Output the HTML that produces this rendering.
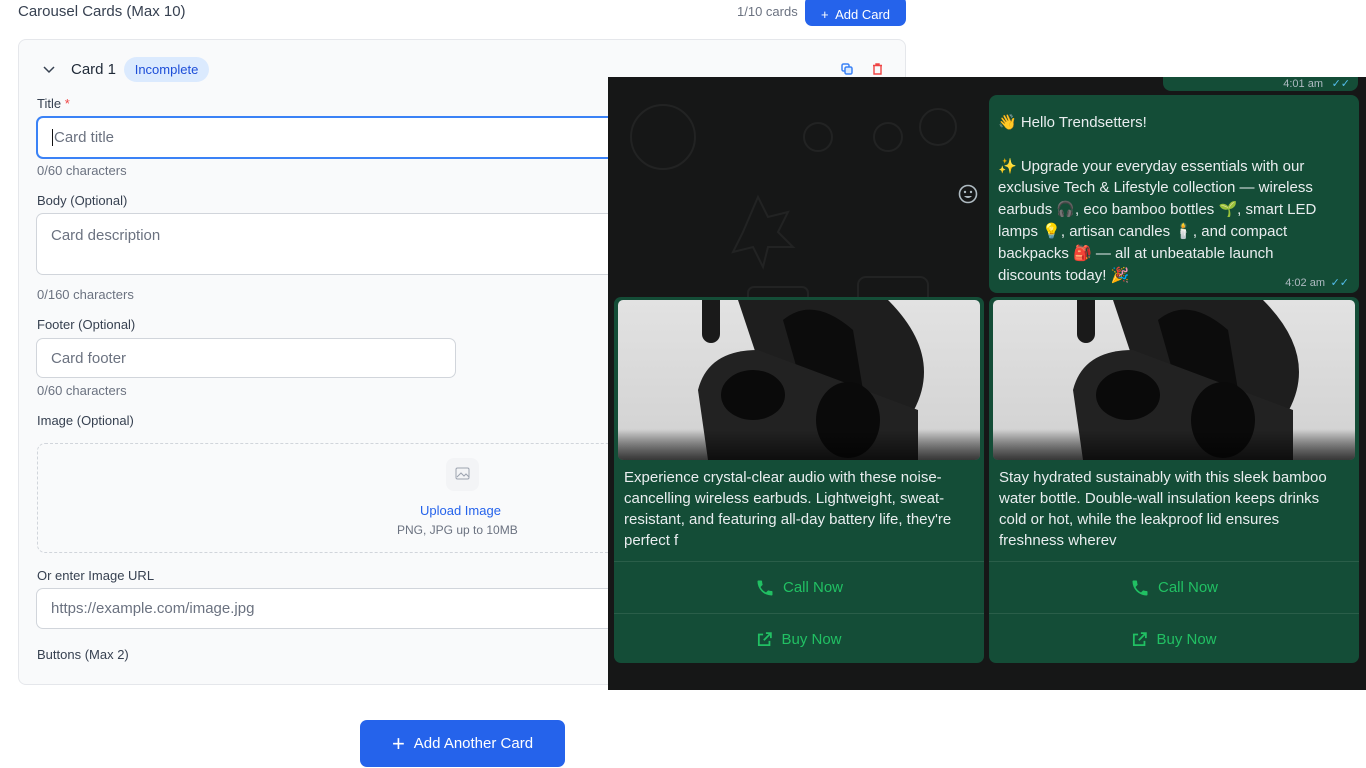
<!DOCTYPE html>
<html><head><meta charset="utf-8"><style>
*{box-sizing:border-box;margin:0;padding:0}
body{width:1366px;height:768px;overflow:hidden;background:#fff;font-family:"Liberation Sans",sans-serif;position:relative;color:#374151}
.abs{position:absolute}
.lbl{position:absolute;left:37px;font-size:13px;color:#374151}
.hint{position:absolute;left:37px;font-size:13px;color:#6b7280}
.inp{position:absolute;left:36px;background:#fff;border:1px solid #d1d5db;border-radius:7px;font-size:15px;color:#6b7280;padding-left:14px;display:flex;align-items:center}
.wa{position:absolute;left:608px;top:77px;width:758px;height:613px;background:#161717;overflow:hidden}
.bub{position:absolute;background:#144d37;border-radius:8px;color:#e9edef;font-size:15px;line-height:21.8px}
.card{position:absolute;top:297px;width:370px;height:366px;background:#144d37;border-radius:7px;overflow:hidden}
.img{position:absolute;left:4px;top:3px;width:362px;height:160px;border-radius:5px;background:linear-gradient(#e2e2e2,#d4d4d4 80%,#8a8a8a);overflow:hidden}
.ctext{position:absolute;left:10px;top:170px;font-size:15px;line-height:21px;color:#e9edef}
.btn{position:absolute;left:0;width:370px;height:52px;border-top:1px solid #2a5e49;color:#21c063;font-size:15px;display:flex;align-items:center;justify-content:center;gap:8px}
</style></head><body>
<div class="abs" style="left:18px;top:3px;font-size:15px;color:#374151">Carousel Cards (Max 10)</div>
<div class="abs" style="left:737px;top:4px;font-size:13px;color:#6b7280">1/10 cards</div>
<div class="abs" style="left:805px;top:-4px;width:101px;height:30px;background:#2563eb;border-radius:7px;color:#fff;font-size:13px;display:flex;align-items:center;justify-content:center;padding-top:6px">+&nbsp; Add Card</div>
<div class="abs" style="left:18px;top:39px;width:888px;height:646px;background:#f9fafb;border:1px solid #e5e7eb;border-radius:8px"></div>
<svg class="abs" style="left:42px;top:64px" width="14" height="12" viewBox="0 0 14 12"><path d="M2 3l5 5 5-5" stroke="#374151" stroke-width="1.5" fill="none"/></svg>
<div class="abs" style="left:71px;top:61px;font-size:15px;color:#1f2937">Card 1</div>
<div class="abs" style="left:124px;top:57px;width:85px;height:25px;background:#dbeafe;border-radius:13px;color:#1d4ed8;font-size:13px;display:flex;align-items:center;justify-content:center">Incomplete</div>
<svg class="abs" style="left:841px;top:63px" width="12" height="12" viewBox="0 0 12 12"><rect x="1" y="1" width="7" height="7" rx="1.5" fill="none" stroke="#3b82f6" stroke-width="1.5"/><rect x="4" y="4" width="7" height="7" rx="1.5" fill="#dbeafe" stroke="#3b82f6" stroke-width="1.5"/></svg>
<svg class="abs" style="left:872px;top:63px" width="11" height="12" viewBox="0 0 11 12"><path d="M1 2.5h9M4 2.5V1h3v1.5M2 3v8h7V3" fill="none" stroke="#ef4444" stroke-width="1.4"/></svg>
<div class="lbl" style="top:96px">Title <span style="color:#ef4444">*</span></div>
<div class="inp" style="top:116px;width:600px;height:43px;border:2px solid #3b82f6;border-right:none;border-radius:7px 0 0 7px"><span style="border-left:1px solid #111;padding-left:1px">Card title</span></div>
<div class="hint" style="top:163px">0/60 characters</div>
<div class="lbl" style="top:193px">Body (Optional)</div>
<div class="inp" style="top:213px;width:600px;height:62px;align-items:flex-start;padding-top:13px;border-right:none">Card description</div>
<div class="hint" style="top:287px">0/160 characters</div>
<div class="lbl" style="top:317px">Footer (Optional)</div>
<div class="inp" style="top:338px;width:420px;height:40px">Card footer</div>
<div class="hint" style="top:383px">0/60 characters</div>
<div class="lbl" style="top:413px">Image (Optional)</div>
<div class="abs" style="left:37px;top:443px;width:600px;height:110px;border:1.5px dashed #d1d5db;border-right:none;border-radius:8px 0 0 8px"></div>
<div class="abs" style="left:446px;top:458px;width:33px;height:33px;background:#f3f4f6;border-radius:8px"></div>
<svg class="abs" style="left:455px;top:467px" width="15" height="14" viewBox="0 0 15 14"><rect x="1" y="1" width="13" height="11" rx="1.5" fill="none" stroke="#9ca3af"/><path d="M2 10l4-4 3 3 2-2 3 3" fill="none" stroke="#9ca3af"/></svg>
<div class="abs" style="left:420px;top:503px;font-size:13px;color:#2563eb">Upload Image</div>
<div class="abs" style="left:397px;top:523px;font-size:12px;color:#6b7280">PNG, JPG up to 10MB</div>
<div class="lbl" style="top:568px">Or enter Image URL</div>
<div class="inp" style="top:588px;width:600px;height:41px;border-right:none">https://example.com/image.jpg</div>
<div class="lbl" style="top:647px">Buttons (Max 2)</div>
<div class="abs" style="left:360px;top:720px;width:205px;height:47px;background:#2563eb;border-radius:7px;color:#fff;font-size:15px;display:flex;align-items:center;justify-content:center">
<span style="font-size:22px;margin-right:9px;font-weight:300">+</span>Add Another Card</div>

<div class="wa">
<svg width="758" height="613" style="position:absolute;left:0;top:0" opacity="0.6">
<g fill="none" stroke="#2a2b2b" stroke-width="2">
<circle cx="55" cy="60" r="32"/><circle cx="210" cy="60" r="14"/><circle cx="280" cy="60" r="14"/><circle cx="330" cy="50" r="18"/>
<path d="M150 120l10 20 20-5-10 20 15 15-25 0-5 20-10-20-20 5 10-20z"/><rect x="140" y="210" width="60" height="50" rx="6"/>
<circle cx="100" cy="300" r="25"/><rect x="60" y="360" width="50" height="40" rx="6"/><circle cx="270" cy="400" r="40"/>
<path d="M20 500l40 20 20 50"/><circle cx="200" cy="520" r="20"/><rect x="250" y="200" width="70" height="40" rx="8"/>
</g></svg>
<div class="bub" style="left:555px;top:-10px;width:195px;height:24px;border-radius:0 0 8px 8px"><span style="position:absolute;left:10px;top:-10px;font-size:15px;color:#e9edef">from group yes</span><span style="position:absolute;right:35px;top:7px;font-size:11px;color:#aebac1">4:01 am</span><span style="position:absolute;right:8px;top:7px;font-size:11px;color:#53bdeb">✓✓</span></div>
<svg class="abs" style="left:350px;top:107px" width="20" height="20" viewBox="0 0 20 20"><circle cx="10" cy="10" r="8.5" fill="none" stroke="#aebac1" stroke-width="1.6"/><circle cx="7" cy="8" r="1.2" fill="#aebac1"/><circle cx="13" cy="8" r="1.2" fill="#aebac1"/><path d="M6 12q4 4 8 0z" fill="#aebac1"/></svg>
</div>
<div class="bub" style="left:989px;top:95px;width:370px;height:198px;padding:17px 9px"><div style="width:335px">👋 Hello Trendsetters!<br><br>✨ Upgrade your everyday essentials with our exclusive Tech &amp; Lifestyle collection — wireless earbuds 🎧, eco bamboo bottles 🌱, smart LED lamps 💡, artisan candles 🕯️, and compact backpacks 🎒 — all at unbeatable launch discounts today! 🎉</div>
<span style="position:absolute;right:34px;bottom:4px;font-size:11px;color:#aebac1;line-height:12px">4:02 am</span><span style="position:absolute;right:10px;bottom:4px;font-size:11px;color:#53bdeb;line-height:12px">✓✓</span></div>

<div class="card" style="left:614px">
<div class="img"><svg width="362" height="160" viewBox="0 0 362 160"><path d="M84 0h18v34a9 9 0 0 1-18 0z" fill="#1a1a1a"/><path d="M120 0h150q60 60 20 120l-40 10-110-70z" fill="#1e1e1e"/><path d="M165 20q30-25 70 10l10 60-60 0z" fill="#0c0c0c"/><path d="M80 90q10-40 60-40l160 60 0 50H90z" fill="#222"/><ellipse cx="135" cy="95" rx="32" ry="25" fill="#0a0a0a"/><ellipse cx="230" cy="120" rx="32" ry="38" fill="#0a0a0a"/><path d="M0 130h362v30H0z" fill="url(#g)" opacity=".6"/><defs><linearGradient id="g" x1="0" y1="0" x2="0" y2="1"><stop offset="0" stop-color="#000" stop-opacity="0"/><stop offset="1" stop-color="#000"/></linearGradient></defs></svg></div>
<div class="ctext" style="width:352px">Experience crystal-clear audio with these noise-cancelling wireless earbuds. Lightweight, sweat-resistant, and featuring all-day battery life, they're perfect f</div>
<div class="btn" style="top:264px"><svg width="20" height="20" viewBox="0 0 24 24"><path d="M6.6 10.8a15 15 0 0 0 6.6 6.6l2.2-2.2a1 1 0 0 1 1-.25 11 11 0 0 0 3.6.6 1 1 0 0 1 1 1V20a1 1 0 0 1-1 1A17 17 0 0 1 3 4a1 1 0 0 1 1-1h3.5a1 1 0 0 1 1 1 11 11 0 0 0 .6 3.6 1 1 0 0 1-.25 1z" fill="#21c063"/></svg>Call Now</div>
<div class="btn" style="top:316px"><svg width="17" height="17" viewBox="0 0 24 24"><path d="M19 14v6H4V5h6M14 3h7v7M21 3l-10 10" fill="none" stroke="#21c063" stroke-width="2.5"/></svg>Buy Now</div>
</div>
<div class="card" style="left:989px">
<div class="img"><svg width="362" height="160" viewBox="0 0 362 160"><path d="M84 0h18v34a9 9 0 0 1-18 0z" fill="#1a1a1a"/><path d="M120 0h150q60 60 20 120l-40 10-110-70z" fill="#1e1e1e"/><path d="M165 20q30-25 70 10l10 60-60 0z" fill="#0c0c0c"/><path d="M80 90q10-40 60-40l160 60 0 50H90z" fill="#222"/><ellipse cx="135" cy="95" rx="32" ry="25" fill="#0a0a0a"/><ellipse cx="230" cy="120" rx="32" ry="38" fill="#0a0a0a"/><path d="M0 130h362v30H0z" fill="url(#g2)" opacity=".6"/><defs><linearGradient id="g2" x1="0" y1="0" x2="0" y2="1"><stop offset="0" stop-color="#000" stop-opacity="0"/><stop offset="1" stop-color="#000"/></linearGradient></defs></svg></div>
<div class="ctext" style="width:342px">Stay hydrated sustainably with this sleek bamboo water bottle. Double-wall insulation keeps drinks cold or hot, while the leakproof lid ensures freshness wherev</div>
<div class="btn" style="top:264px"><svg width="20" height="20" viewBox="0 0 24 24"><path d="M6.6 10.8a15 15 0 0 0 6.6 6.6l2.2-2.2a1 1 0 0 1 1-.25 11 11 0 0 0 3.6.6 1 1 0 0 1 1 1V20a1 1 0 0 1-1 1A17 17 0 0 1 3 4a1 1 0 0 1 1-1h3.5a1 1 0 0 1 1 1 11 11 0 0 0 .6 3.6 1 1 0 0 1-.25 1z" fill="#21c063"/></svg>Call Now</div>
<div class="btn" style="top:316px"><svg width="17" height="17" viewBox="0 0 24 24"><path d="M19 14v6H4V5h6M14 3h7v7M21 3l-10 10" fill="none" stroke="#21c063" stroke-width="2.5"/></svg>Buy Now</div>
</div>
</body></html>
